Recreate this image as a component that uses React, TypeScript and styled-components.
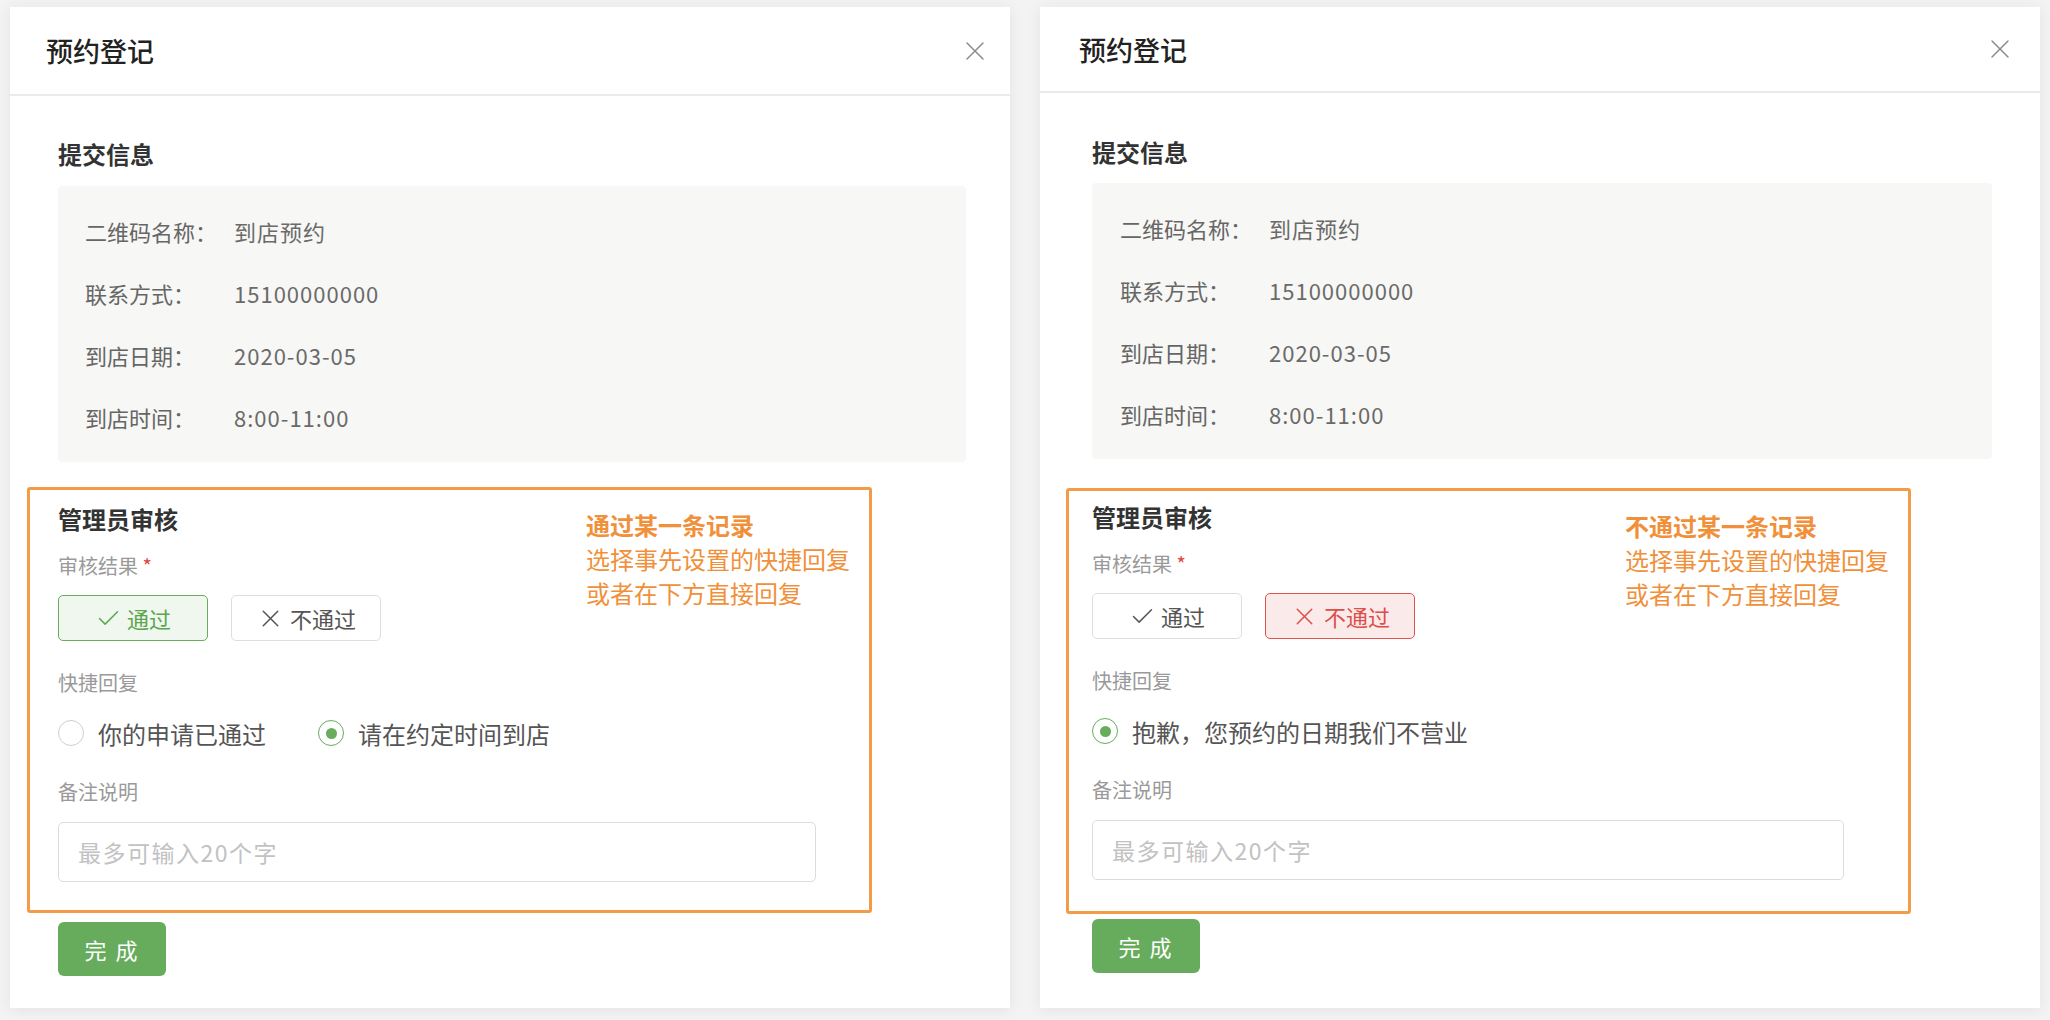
import React from 'react';
import styled, { createGlobalStyle } from 'styled-components';
import { Check, X } from 'lucide-react';

const GlobalStyle = createGlobalStyle`
  html, body {
    margin: 0;
    padding: 0;
    background: #f3f3f3;
  }
  body {
    font-family: 'Noto Sans CJK SC', 'Noto Sans', sans-serif;
  }
  * {
    box-sizing: border-box;
  }
`;

type Metrics = {
  headerH: number;
  headerPad: number;
  closePad: number;
  padL: number;
  padR: number;
  bodyTop: number;
  titleGap: number;
  boxGap: number;
  labelPad: number;
  auditOffset: number;
  auditTop: number;
  auditBottom: number;
  doneGap: number;
  inputW: number;
};

type Result = 'pass' | 'fail';

type PanelProps = {
  m: Metrics;
  result: Result;
  replies: { text: string; checked: boolean }[];
  note: string;
};

const info = [
  { label: '二维码名称：', value: '到店预约' },
  { label: '联系方式：', value: '15100000000' },
  { label: '到店日期：', value: '2020-03-05' },
  { label: '到店时间：', value: '8:00-11:00' },
];

const Panel = ({ m, result, replies, note }: PanelProps) => {
  return (
    <Card>
      <Header $h={m.headerH} $l={m.headerPad} $r={m.closePad}>
        <Title>预约登记</Title>
        <X size={32} strokeWidth={1.1} color="#8a8a8a" />
      </Header>
      <Body $top={m.bodyTop} $l={m.padL} $r={m.padR}>
        <SectionTitle $gap={m.titleGap}>提交信息</SectionTitle>
        <InfoBox $pad={m.labelPad}>
          {info.map((row) => (
            <React.Fragment key={row.label}>
              <InfoLabel>{row.label}</InfoLabel>
              <InfoValue>{row.value}</InfoValue>
            </React.Fragment>
          ))}
        </InfoBox>

        <AuditBox
          $gap={m.boxGap}
          $offset={m.auditOffset}
          $top={m.auditTop}
          $bottom={m.auditBottom}
        >
          <Note>
            <strong>{note}</strong>
            <span>选择事先设置的快捷回复</span>
            <span>或者在下方直接回复</span>
          </Note>
          <AuditTitle>管理员审核</AuditTitle>
          <FieldLabel>
            审核结果 <Required>*</Required>
          </FieldLabel>
          <ChoiceRow>
            <Choice $tone={result === 'pass' ? 'pass' : 'idle'}>
              <Check size={27} strokeWidth={1.3} />
              通过
            </Choice>
            <Choice $tone={result === 'fail' ? 'fail' : 'idle'}>
              <X size={29} strokeWidth={1.2} />
              不通过
            </Choice>
          </ChoiceRow>
          <FieldLabel $gap={28}>快捷回复</FieldLabel>
          <RadioRow>
            {replies.map((r) => (
              <RadioItem key={r.text}>
                <RadioDot $on={r.checked} />
                {r.text}
              </RadioItem>
            ))}
          </RadioRow>
          <FieldLabel $gap={30}>备注说明</FieldLabel>
          <NoteInput $w={m.inputW} placeholder="最多可输入20个字" />
        </AuditBox>

        <DoneButton $gap={m.doneGap}>完 成</DoneButton>
      </Body>
    </Card>
  );
};

const leftMetrics: Metrics = {
  headerH: 89,
  headerPad: 36,
  closePad: 19,
  padL: 48,
  padR: 44,
  bodyTop: 43,
  titleGap: 17,
  boxGap: 25,
  labelPad: 27,
  auditOffset: 31,
  auditTop: 14,
  auditBottom: 28,
  doneGap: 9,
  inputW: 758,
};

const rightMetrics: Metrics = {
  headerH: 86,
  headerPad: 39,
  closePad: 24,
  padL: 52,
  padR: 48,
  bodyTop: 44,
  titleGap: 16,
  boxGap: 29,
  labelPad: 28,
  auditOffset: 26,
  auditTop: 11,
  auditBottom: 31,
  doneGap: 5,
  inputW: 752,
};

const App = () => {
  return (
    <>
      <GlobalStyle />
      <Page>
        <Panel
          m={leftMetrics}
          result="pass"
          note="通过某一条记录"
          replies={[
            { text: '你的申请已通过', checked: false },
            { text: '请在约定时间到店', checked: true },
          ]}
        />
        <Panel
          m={rightMetrics}
          result="fail"
          note="不通过某一条记录"
          replies={[{ text: '抱歉，您预约的日期我们不营业', checked: true }]}
        />
      </Page>
    </>
  );
};

export default App;

const Page = styled.div`
  display: flex;
  gap: 30px;
  width: 2050px;
  height: 1020px;
  padding: 7px 0 0 10px;
  background: #f3f3f3;
  overflow: hidden;
`;

const Card = styled.div`
  width: 1000px;
  height: 1001px;
  background: #fff;
  box-shadow: 0 2px 14px rgba(0, 0, 0, 0.07);
  display: flex;
  flex-direction: column;
`;

const Header = styled.div<{ $h: number; $l: number; $r: number }>`
  height: ${(p) => p.$h}px;
  flex-shrink: 0;
  display: flex;
  align-items: center;
  justify-content: space-between;
  padding: 0 ${(p) => p.$r}px 0 ${(p) => p.$l}px;
  border-bottom: 2px solid #ebebeb;
`;

const Title = styled.h1`
  margin: 0;
  font-size: 27px;
  font-weight: 500;
  color: #222;
`;

const Body = styled.div<{ $top: number; $l: number; $r: number }>`
  padding: ${(p) => p.$top}px ${(p) => p.$r}px 0 ${(p) => p.$l}px;
  display: flex;
  flex-direction: column;
  align-items: flex-start;
`;

const SectionTitle = styled.h2<{ $gap: number }>`
  margin: 0 0 ${(p) => p.$gap}px;
  font-size: 24px;
  line-height: 30px;
  font-weight: 700;
  color: #333;
`;

const InfoBox = styled.div<{ $pad: number }>`
  align-self: stretch;
  display: grid;
  grid-template-columns: 149px 1fr;
  grid-auto-rows: 62px;
  align-items: center;
  background: #f7f7f5;
  border-radius: 4px;
  padding: 14px 0 14px ${(p) => p.$pad}px;
  font-size: 22px;
`;

const InfoLabel = styled.div`
  color: #666;
  white-space: nowrap;
`;

const InfoValue = styled.div`
  color: #6a6a6a;
  letter-spacing: 1px;
`;

const AuditBox = styled.div<{
  $gap: number;
  $offset: number;
  $top: number;
  $bottom: number;
}>`
  position: relative;
  width: 845px;
  margin: ${(p) => p.$gap}px 0 0 -${(p) => p.$offset}px;
  padding: ${(p) => p.$top}px 0 ${(p) => p.$bottom}px
    ${(p) => p.$offset - 3}px;
  border: 3px solid #f39c48;
  border-radius: 3px;
  display: flex;
  flex-direction: column;
  align-items: flex-start;
`;

const Note = styled.div`
  position: absolute;
  top: 18px;
  left: 556px;
  display: flex;
  flex-direction: column;
  font-size: 24px;
  line-height: 34px;
  color: #f0903a;

  strong {
    font-weight: 700;
  }
`;

const AuditTitle = styled.h3`
  margin: 0 0 18px;
  font-size: 24px;
  line-height: 30px;
  font-weight: 700;
  color: #333;
`;

const FieldLabel = styled.div<{ $gap?: number }>`
  margin-top: ${(p) => p.$gap ?? 0}px;
  font-size: 20px;
  line-height: 28px;
  color: #9a9a9a;
`;

const Required = styled.span`
  color: #e0463c;
`;

const ChoiceRow = styled.div`
  display: flex;
  gap: 23px;
  margin-top: 15px;
`;

const tones = {
  pass: { border: '#67ad5b', bg: '#eff7ee', color: '#5da651' },
  fail: { border: '#dc5450', bg: '#fbeaea', color: '#dc4f4a' },
  idle: { border: '#dedede', bg: '#fff', color: '#555' },
};

const Choice = styled.div<{ $tone: keyof typeof tones }>`
  width: 150px;
  height: 46px;
  display: flex;
  align-items: center;
  justify-content: center;
  gap: 5px;
  border: 1.5px solid ${(p) => tones[p.$tone].border};
  background: ${(p) => tones[p.$tone].bg};
  color: ${(p) => tones[p.$tone].color};
  border-radius: 5px;
  font-size: 22px;
`;

const RadioRow = styled.div`
  display: flex;
  gap: 52px;
  margin-top: 21px;
`;

const RadioItem = styled.label`
  display: flex;
  align-items: center;
  gap: 14px;
  height: 30px;
  font-size: 24px;
  color: #555;
`;

const RadioDot = styled.span<{ $on: boolean }>`
  width: 26px;
  height: 26px;
  border-radius: 50%;
  border: 1.5px solid ${(p) => (p.$on ? '#67ad5b' : '#cfcfcf')};
  display: flex;
  align-items: center;
  justify-content: center;

  &::after {
    content: '';
    width: 11px;
    height: 11px;
    border-radius: 50%;
    background: ${(p) => (p.$on ? '#67ad5b' : 'transparent')};
  }
`;

const NoteInput = styled.input<{ $w: number }>`
  width: ${(p) => p.$w}px;
  height: 60px;
  margin-top: 16px;
  padding: 0 0 0 19px;
  border: 1.5px solid #dcdcdc;
  border-radius: 5px;
  font-family: inherit;
  font-size: 23px;
  letter-spacing: 1.5px;
  outline: none;

  &::placeholder {
    color: #c2c2c2;
  }
`;

const DoneButton = styled.button<{ $gap: number }>`
  margin-top: ${(p) => p.$gap}px;
  width: 108px;
  height: 54px;
  border: none;
  border-radius: 6px;
  background: #66ac5c;
  color: #fff;
  font-family: inherit;
  font-size: 22px;
  letter-spacing: 2px;
`;
